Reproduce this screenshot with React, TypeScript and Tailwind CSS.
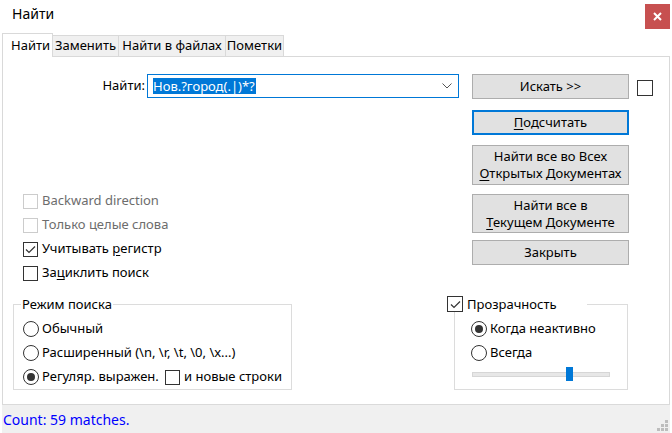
import React from 'react';

const ui = "font-['Noto_Sans',sans-serif]";

const CheckBox: React.FC<{ checked?: boolean; disabled?: boolean; children?: React.ReactNode }> = ({
  checked,
  disabled,
  children,
}) => {
  return (
    <div className="flex items-center h-[24px]">
      <div
        className={`w-[15px] h-[15px] border bg-white flex items-center justify-center ${
          disabled ? 'border-[#cccccc]' : 'border-[#333333]'
        }`}
      >
        {checked && (
          <svg width="11" height="9" viewBox="0 0 11 9">
            <path d="M1 4.5 L4 7.5 L10 1.5" fill="none" stroke="#333" strokeWidth="1.2" />
          </svg>
        )}
      </div>
      {children && (
        <span className={`ml-[4px] ${disabled ? 'text-[#6d6d6d]' : 'text-black'}`}>{children}</span>
      )}
    </div>
  );
};

const Radio: React.FC<{ checked?: boolean; children: React.ReactNode }> = ({ checked, children }) => {
  return (
    <div className="flex items-center h-[24px]">
      <div className="w-[16px] h-[16px] rounded-full border border-[#333333] bg-white flex items-center justify-center">
        {checked && <div className="w-[8px] h-[8px] rounded-full bg-[#333333]" />}
      </div>
      <span className="ml-[3px]">{children}</span>
    </div>
  );
};

const Btn: React.FC<{ h: string; focused?: boolean; children: React.ReactNode }> = ({ h, focused, children }) => {
  return (
    <div
      className={`${h} w-[157px] bg-[#e1e1e1] flex flex-col items-center justify-center text-center leading-[17px] ${
        focused ? 'border-2 border-[#0078d7]' : 'border border-[#adadad]'
      }`}
    >
      {children}
    </div>
  );
};

const U: React.FC<{ children: React.ReactNode }> = ({ children }) => <span className="underline underline-offset-2">{children}</span>;

export default function App() {
  return (
    <div className={`w-[672px] h-[433px] bg-white flex flex-col overflow-hidden px-[2px] text-[13px] text-black ${ui}`}>
      {/* title bar */}
      <div className="h-[33px] flex items-start justify-between shrink-0">
        <div className="pl-[10px] pt-[4px] text-[14px] leading-[20px]">Найти</div>
        <div className="mt-[4px] w-[25px] h-[25px] bg-[#c75050] flex items-center justify-center">
          <svg width="9" height="9" viewBox="0 0 9 9">
            <path d="M1 1 L8 8 M8 1 L1 8" stroke="#fff" strokeWidth="2" />
          </svg>
        </div>
      </div>

      {/* tabs */}
      <div className="h-[23px] flex items-end shrink-0">
        <div className="relative z-10 -mb-px h-[24px] w-[51px] bg-white border-x border-t border-[#d9d9d9] pl-[8px] leading-[22px]">
          Найти
        </div>
        <div className="h-[21px] w-[66px] bg-[#f0f0f0] border-t border-r border-[#d9d9d9] flex items-center justify-center">
          Заменить
        </div>
        <div className="h-[21px] w-[107px] bg-[#f0f0f0] border-t border-r border-[#d9d9d9] flex items-center justify-center">
          Найти в файлах
        </div>
        <div className="h-[21px] w-[58px] bg-[#f0f0f0] border-t border-r border-[#d9d9d9] flex items-center justify-center">
          Пометки
        </div>
      </div>

      {/* panel */}
      <div className="flex-1 border-t border-x border-[#d9d9d9] flex flex-col">
        <div className="flex mt-[17px]">
          <div className="w-[469px] flex flex-col">
            <div className="flex items-center h-[24px]">
              <div className="w-[142px] text-right">Найти:</div>
              <div className="ml-[2px] w-[312px] h-[24px] border border-[#0078d7] flex items-center pl-[5px] pr-[6px]">
                <span className="bg-[#0078d7] text-white leading-[16px] pr-[1px]">Нов.?город(.|)*?</span>
                <svg className="ml-auto" width="10" height="6" viewBox="0 0 10 6">
                  <path d="M0.5 0.5 L5 5 L9.5 0.5" fill="none" stroke="#555" strokeWidth="1" />
                </svg>
              </div>
            </div>
            <div className="mt-[91px] pl-[20px] flex flex-col">
              <CheckBox disabled>Backward direction</CheckBox>
              <CheckBox disabled>Только целые слова</CheckBox>
              <CheckBox checked>
                Учитывать <U>р</U>егистр
              </CheckBox>
              <CheckBox>
                За<U>ц</U>иклить поиск
              </CheckBox>
            </div>
          </div>

          <div className="flex flex-col w-[157px]">
            <Btn h="h-[25px]">Искать &gt;&gt;</Btn>
            <div className="mt-[11px]">
              <Btn h="h-[25px]" focused>
                <span>
                  <U>П</U>одсчитать
                </span>
              </Btn>
            </div>
            <div className="mt-[10px]">
              <Btn h="h-[40px]">
                <span>Найти все во Всех</span>
                <span>
                  <U>О</U>ткрытых Документах
                </span>
              </Btn>
            </div>
            <div className="mt-[9px]">
              <Btn h="h-[39px]">
                <span>Найти все в</span>
                <span>
                  <U>Т</U>екущем Документе
                </span>
              </Btn>
            </div>
            <div className="mt-[7px]">
              <Btn h="h-[25px]">Закрыть</Btn>
            </div>
          </div>

          <div className="ml-[8px] mt-[6px]">
            <div className="w-[16px] h-[16px] border border-[#333333] bg-white" />
          </div>
        </div>

        <div className="flex items-start mt-[11px]">
          <fieldset className="ml-[10px] w-[279px] h-[94px] border border-[#dcdcdc]">
            <legend className="ml-[7px] px-[1px] leading-[16px]">Режим поиска</legend>
            <div className="pl-[9px] mt-[5px] flex flex-col">
              <Radio>Обычный</Radio>
              <Radio>Расширенный (\n, \r, \t, \0, \x...)</Radio>
              <div className="flex items-center">
                <div className="w-[142px] whitespace-nowrap">
                  <Radio checked>Регуляр. выражен.</Radio>
                </div>
                <CheckBox>и новые строки</CheckBox>
              </div>
            </div>
          </fieldset>

          <fieldset className="ml-[162px] w-[174px] h-[94px] border border-[#dcdcdc]">
            <legend className="-ml-[8px] w-[140px] bg-white leading-[16px]">
              <div className="flex items-center h-[16px]">
                <div className="w-[16px] h-[16px] border border-[#333333] bg-white flex items-center justify-center">
                  <svg width="11" height="9" viewBox="0 0 11 9">
                    <path d="M1 4.5 L4 7.5 L10 1.5" fill="none" stroke="#333" strokeWidth="1.2" />
                  </svg>
                </div>
                <span className="ml-[4px]">Прозрачность</span>
              </div>
            </legend>
            <div className="pl-[16px] mt-[5px] flex flex-col">
              <Radio checked>Когда неактивно</Radio>
              <Radio>Всегда</Radio>
              <div className="relative mt-[2px] ml-[1px] w-[138px] h-[14px] flex items-center">
                <div className="w-full h-[5px] bg-[#e7e7e7] border border-[#d6d6d6]" />
                <div className="absolute left-[94px] top-0 w-[7px] h-[14px] bg-[#0078d7]" />
              </div>
            </div>
          </fieldset>
        </div>
      </div>

      {/* status bar */}
      <div className="h-[29px] shrink-0 bg-[#f0f0f0] border-t border-[#dadada] flex items-center justify-between pl-[1px]">
        <span className="text-[14px] text-[#0000ff]">Count: 59 matches.</span>
        <svg className="self-end mb-[1px] mr-[1px]" width="12" height="12" viewBox="0 0 12 12">
          <rect x="8" y="0" width="3" height="3" fill="#bdbdbd" />
          <rect x="4" y="4" width="3" height="3" fill="#bdbdbd" />
          <rect x="8" y="4" width="3" height="3" fill="#bdbdbd" />
          <rect x="0" y="8" width="3" height="3" fill="#bdbdbd" />
          <rect x="4" y="8" width="3" height="3" fill="#bdbdbd" />
          <rect x="8" y="8" width="3" height="3" fill="#bdbdbd" />
        </svg>
      </div>
    </div>
  );
}
